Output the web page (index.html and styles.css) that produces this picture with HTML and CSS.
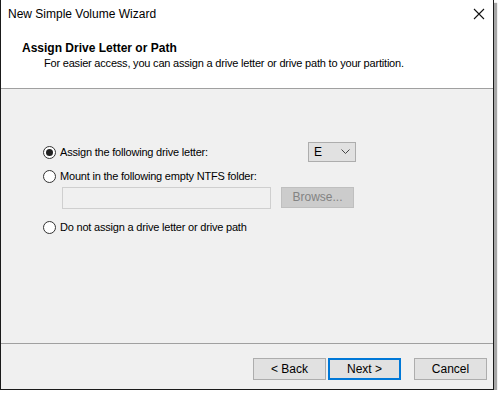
FILE: index.html
```html
<!DOCTYPE html>
<html lang="en">
<head>
<meta charset="utf-8">
<title>New Simple Volume Wizard</title>
<link rel="stylesheet" href="styles.css">
</head>
<body>

<!-- WIZARD WINDOW -->
<div class="window">
  <div class="titlebar">
    <span class="title">New Simple Volume Wizard</span>
    <svg class="close" width="12" height="12" viewBox="0 0 12 12"><path d="M1 1L11 11M11 1L1 11" stroke="#111" stroke-width="1.1" fill="none"/></svg>
  </div>

  <div class="header">
    <h1>Assign Drive Letter or Path</h1>
    <p>For easier access, you can assign a drive letter or drive path to your partition.</p>
  </div>

  <div class="content">
    <div class="row">
      <label class="radio"><span class="dot on"></span>Assign the following drive letter:</label>
      <div class="combo"><span>E</span>
        <svg width="9" height="6" viewBox="0 0 9 6"><path d="M0.5 0.5L4.5 4.5L8.5 0.5" stroke="#444" stroke-width="1" fill="none"/></svg>
      </div>
    </div>
    <label class="radio second"><span class="dot"></span>Mount in the following empty NTFS folder:</label>
    <div class="folder">
      <div class="textbox"></div>
      <button class="btn disabled">Browse...</button>
    </div>
    <label class="radio third"><span class="dot"></span>Do not assign a drive letter or drive path</label>
  </div>

  <div class="footer">
    <button class="btn">&lt; Back</button>
    <button class="btn default">Next &gt;</button>
    <button class="btn cancel">Cancel</button>
  </div>
</div>

</body>
</html>
```

FILE: styles.css
```css
/* --------- GENERAL --------- */
*{box-sizing:border-box;margin:0;padding:0}
body{
  background:#fff;
  font-family:'Liberation Sans',Arial,sans-serif;
  font-size:11px;
  letter-spacing:-.2px;
  color:#000;
}

/* --------- WINDOW --------- */
.window{
  width:494px;
  height:390px;
  background:#f0f0f0;
  border:1px solid #1a1a1a;
  border-top:none;
  box-shadow:3px 3px 1px rgba(0,0,0,.35);
  display:flex;
  flex-direction:column;
}
.titlebar{
  height:28px;
  background:#fff;
  display:flex;
  align-items:center;
  justify-content:space-between;
  padding:0 8px 0 7px;
}
.title{font-size:12px;letter-spacing:0}

.header{
  background:#fff;
  padding:13px 0 17px 21px;
  border-bottom:1px solid #a0a0a0;
  line-height:15px;
}
.header h1{font-size:12px;font-weight:700;letter-spacing:0}
.header p{padding-left:22px}

/* --------- OPTIONS --------- */
.content{
  flex:1;
  padding:53px 0 0 42px;
  line-height:15px;
}
.row{display:flex;align-items:center;justify-content:space-between;width:313px}
.radio{display:flex;align-items:center;gap:4px}
.dot{
  width:13px;height:13px;
  border:1px solid #333;
  border-radius:50%;
  background:#fff;
  display:flex;align-items:center;justify-content:center;
}
.dot.on::after{content:'';width:7px;height:7px;border-radius:50%;background:#222}
.second{margin-top:7px}
.third{margin-top:11px}

.combo{
  width:48px;height:20px;
  background:#e1e1e1;
  border:1px solid #adadad;
  display:flex;align-items:center;justify-content:space-between;
  padding:0 5px 0 5px;
  font-size:12px;
}

.folder{display:flex;gap:10px;padding-left:19px;margin-top:3px}
.textbox{width:209px;height:22px;border:1px solid #cfcfcf;background:#f0f0f0}

/* --------- BUTTONS --------- */
.btn{
  width:73px;height:22px;
  font:inherit;
  font-size:12px;
  letter-spacing:0;
  background:#e1e1e1;
  border:1px solid #adadad;
  color:#000;
}
.btn.disabled{background:#cccccc;border-color:#bfbfbf;color:#838383;height:21px}
.btn.default{border:2px solid #0078d7}

.footer{
  height:46px;
  border-top:1px solid #a0a0a0;
  display:flex;
  align-items:flex-start;
  padding:14px 0 0 252px;
  gap:2px;
}
.btn.cancel{margin-left:11px}
```
